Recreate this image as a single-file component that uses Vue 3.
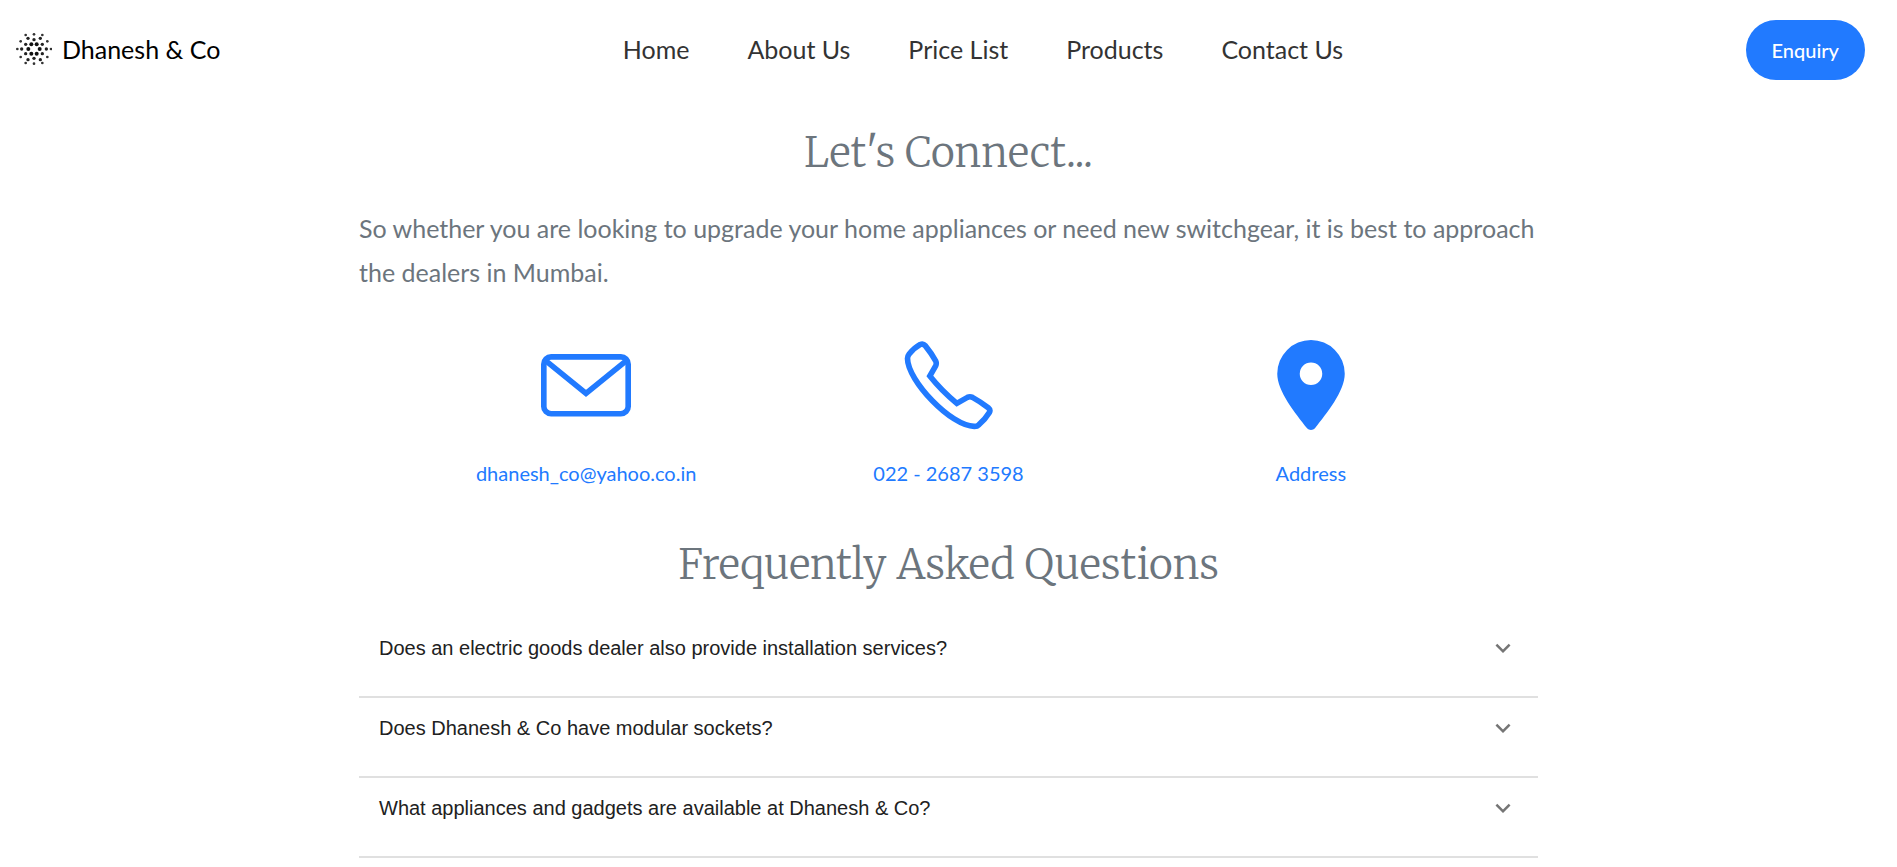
<script setup>
import { ref } from 'vue'

const links = ['Home', 'About Us', 'Price List', 'Products', 'Contact Us']
const questions = [
  'Does an electric goods dealer also provide installation services?',
  'Does Dhanesh & Co have modular sockets?',
  'What appliances and gadgets are available at Dhanesh & Co?',
]
const selected = ref(-1)

const largeDots = [[55, 73], [89, 73], [64, 59], [80, 59], [64, 87], [80, 87]]
const mediumDots = [
  [72, 45], [72, 101], [47, 59], [97, 59], [47, 87], [97, 87],
  [35, 73], [109, 73], [54, 41], [91, 41], [54, 105], [91, 105],
]
const smallDots = [
  [22, 73], [123, 73], [72, 29], [72, 117], [47, 31], [97, 31],
  [32, 50], [112, 50], [32, 97], [112, 97], [47, 115], [97, 115],
]
</script>

<template>
  <header class="header">
    <a class="brand" href="#">
      <svg class="logo" viewBox="18 19 108 108" aria-hidden="true">
        <circle v-for="(d, i) in largeDots" :key="'l' + i" :cx="d[0]" :cy="d[1]" r="6" fill="#111" />
        <circle v-for="(d, i) in mediumDots" :key="'m' + i" :cx="d[0]" :cy="d[1]" r="5" fill="#222" />
        <circle v-for="(d, i) in smallDots" :key="'s' + i" :cx="d[0]" :cy="d[1]" r="4" fill="#333" />
      </svg>
      <span>Dhanesh &amp; Co</span>
    </a>
    <nav class="nav">
      <a v-for="link in links" :key="link" href="#">{{ link }}</a>
    </nav>
    <button class="enquiry" type="button">Enquiry</button>
  </header>

  <main class="main">
    <h1 class="title">Let's Connect...</h1>
    <p class="intro">
      So whether you are looking to upgrade your home appliances or need new switchgear, it is best to approach the dealers in Mumbai.
    </p>

    <div class="contacts">
      <a class="contact" href="#">
        <svg viewBox="0 0 16 16" fill="none" stroke="currentColor" aria-hidden="true">
          <rect x="0.5" y="3" width="15" height="10.1" rx="1.3" />
          <path d="M0.6 3.5 8 9.5l7.4-6" />
        </svg>
        <span>dhanesh_co@yahoo.co.in</span>
      </a>
      <a class="contact" href="#">
        <svg viewBox="0 0 16 16" fill="none" stroke="currentColor" aria-hidden="true">
          <path d="M.8 3.3C.8 7.2 8.6 15.4 12.7 15.35c.4 0 .6-.1.8-.3.8-.7 1.4-1.4 1.85-2.15.2-.35.1-.6-.2-.85-.9-.7-1.8-1.3-2.8-1.85-.3-.15-.6-.15-.9 0L9.57 11.26C7.8 9.8 6.2 8.2 4.77 6.4L5.8 4.6c.15-.3.15-.6 0-.9C5.3 2.8 4.6 1.8 3.95 1 3.7.7 3.4.65 3.05.8 2.3 1.2 1.7 1.75 1.1 2.5c-.2.25-.3.5-.3.8z" />
        </svg>
        <span>022 - 2687 3598</span>
      </a>
      <a class="contact" href="#">
        <svg viewBox="0 0 16 16" fill="currentColor" aria-hidden="true">
          <path fill-rule="evenodd" d="M8 0a6 6 0 0 0-6 6c0 3.1 3.2 7 5.3 9.7.4.4 1 .4 1.4 0C10.8 13 14 9.1 14 6a6 6 0 0 0-6-6zm0 4a2 2 0 1 1 0 4 2 2 0 0 1 0-4z" />
        </svg>
        <span>Address</span>
      </a>
    </div>

    <h2 class="title">Frequently Asked Questions</h2>
    <div class="faq">
      <button
        v-for="(question, i) in questions"
        :key="question"
        class="question"
        type="button"
        :aria-pressed="selected === i"
        @click="selected = i"
      >
        <span>{{ question }}</span>
        <svg viewBox="0 0 24 24" fill="#757575" aria-hidden="true">
          <path d="M16.59 8.59 12 13.17 7.41 8.59 6 10l6 6 6-6z" />
        </svg>
      </button>
    </div>
  </main>
</template>

<style>
body {
  background: #fff;
}
</style>

<style scoped>
.header {
  display: flex;
  align-items: center;
  justify-content: space-between;
  padding: 20px 32px 20px 16px;
  font-family: Lato, sans-serif;
  font-size: 25px;
}

.header a {
  padding-bottom: 2px;
  text-decoration: none;
}

.brand {
  display: flex;
  align-items: center;
  gap: 10px;
  color: #000;
}

.logo {
  width: 36px;
  height: 36px;
}

.nav {
  display: flex;
  gap: 58px;
}

.nav a {
  color: #333;
}

.enquiry {
  height: 60px;
  padding: 0 26px;
  border: 0;
  border-radius: 30px;
  background: #217aff;
  color: #fff;
  font: 500 20px Lato, sans-serif;
}

.main {
  max-width: 1179px;
  margin: 0 auto;
}

.title {
  margin: 0;
  padding: 28px 0;
  color: #6c757d;
  font: 300 41px/50px Merriweather, "DejaVu Serif Condensed", "DejaVu Serif", serif;
  text-align: center;
}

.intro {
  margin: 0;
  color: #6c757d;
  font: 25px/44px Lato, sans-serif;
}

.contacts {
  display: grid;
  grid-template-columns: repeat(3, 1fr);
  padding: 46px 46px 24px;
}

.contact {
  display: flex;
  flex-direction: column;
  align-items: center;
  gap: 28px;
  color: #217aff;
  font: 20px/30px Lato, sans-serif;
  text-decoration: none;
}

.contact svg {
  width: 90px;
  height: 90px;
}

.question {
  display: flex;
  align-items: flex-start;
  justify-content: space-between;
  width: 100%;
  height: 80px;
  padding: 15px 20px;
  border: 0;
  border-bottom: 2px solid #e0e0e0;
  background: none;
  color: #212121;
  font: 20px/30px "Liberation Sans", Arial, sans-serif;
  text-align: left;
}

.question svg {
  width: 30px;
  height: 30px;
}
</style>
